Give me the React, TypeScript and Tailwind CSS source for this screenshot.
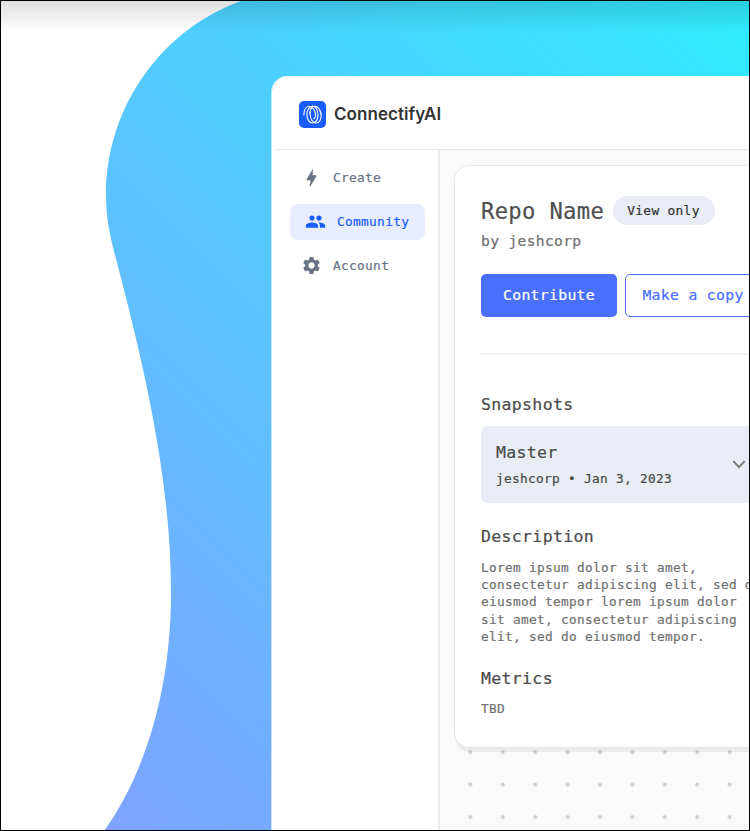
import type { ReactNode } from 'react';
import { MdPeople, MdSettings } from 'react-icons/md';

function Backdrop() {
  return (
    <svg className="absolute inset-0" width="750" height="831" viewBox="0 0 750 831" aria-hidden="true">
      <defs>
        <linearGradient id="sky" gradientUnits="userSpaceOnUse" x1="750" y1="0" x2="15" y2="735">
          <stop offset="0" stopColor="#2febff" />
          <stop offset="1" stopColor="#7ea3ff" />
        </linearGradient>
      </defs>
      <path
        d="M244 0C162 28 106 107 106 195C106 224 112 243 121 278C150 390 171 492 171 593C171 690 145 774 104 831H750V0Z"
        fill="url(#sky)"
      />
    </svg>
  );
}

function Logo() {
  return (
    <svg width="27" height="27" viewBox="0 0 27 27" className="shrink-0" aria-hidden="true">
      <rect width="27" height="27" rx="5" fill="#1a5cff" />
      <g fill="none" stroke="#fff" strokeWidth="1.15" strokeLinecap="round">
        <path d="M4.8 14C5 8.5 7.3 5.2 10 5.2C13.5 5.2 16.6 9.5 16.6 14.5" />
        <path d="M11 12C11 17.5 13.5 22 17 22C20.2 22 22.2 18.5 22.2 13.5" />
        <path d="M13.6 5.2C10.4 5.2 7.9 9 7.9 13.5C7.9 18.5 10.4 22 13.6 22C16.8 22 19 18.5 19 13.7C19 9 16.8 5.2 13.6 5.2Z" />
        <path d="M13.6 5.2C12 6.5 11 9.5 11 12M16.6 14.5C16.4 16 15.5 17.5 14.8 17.8" />
        <path d="M15.5 5.4C18.8 5 21 8.5 22.2 13.5" />
      </g>
    </svg>
  );
}

function Bolt() {
  return (
    <svg width="11" height="18" viewBox="0 0 11 18" className="ml-[4.5px]" fill="currentColor" aria-hidden="true">
      <path
        d="M6.6 .8 1 10.2Q.8 10.9 1.4 10.9H5L4.1 17.2 9.9 7.4Q10.2 6.6 9.4 6.6H6.3Z"
        stroke="currentColor"
        strokeWidth="0.7"
        strokeLinejoin="round"
      />
    </svg>
  );
}

function NavItem({ icon, label, active }: { icon: ReactNode; label: string; active?: boolean }) {
  return (
    <div
      className={
        active
          ? 'flex h-9 items-center rounded-[8px] bg-[#e8eeff] pl-[14px] text-[12.8px] text-[#1a5cff]'
          : 'flex h-9 items-center pl-[11px] text-[12.8px] text-[#687385]'
      }
    >
      <span className={active ? 'flex w-[33px] shrink-0' : 'flex w-[32px] shrink-0'}>{icon}</span>
      <span>{label}</span>
    </div>
  );
}

const heading = 'text-[16.55px] leading-[22px] text-[#4b4b4b]';

export default function App() {
  return (
    <div className="relative flex h-[831px] w-[750px] overflow-hidden bg-white pt-[76px] pl-[271px] font-['DejaVu_Sans_Mono','Liberation_Mono',monospace] tracking-[0.32px] whitespace-nowrap">
      <Backdrop />
      <div className="relative flex w-[700px] shrink-0 flex-col rounded-tl-[16px] border-l border-white/60 bg-white bg-clip-padding [-webkit-text-stroke:0.2px_currentColor]">
        <header className="ml-[3px] flex h-[74px] shrink-0 items-center border-b border-[#e5e5e5] pt-[3px] pl-[24px] [-webkit-text-stroke:0px]">
          <Logo />
          <span className="mt-px ml-[8px] font-['Inter',sans-serif] text-[17px] font-semibold tracking-[0.05px] text-[#333]">
            ConnectifyAI
          </span>
        </header>
        <div className="flex grow">
          <nav className="flex w-[168px] shrink-0 flex-col gap-[8px] border-r-2 border-[#ececec] pt-[10px] pr-[13px] pl-[18px]">
            <NavItem icon={<Bolt />} label="Create" />
            <NavItem icon={<MdPeople size={21} className="-mt-px ml-px" />} label="Community" active />
            <NavItem icon={<MdSettings size={21} className="-mt-[2px]" />} label="Account" />
          </nav>
          <main className="grow bg-[#fafafa] bg-[radial-gradient(circle,#cecece_1.6px,transparent_2.4px)] bg-[length:32.43px_32.43px] bg-[position:14.1px_2.4px] pt-[15px] pl-[14px]">
            <section className="h-[583px] w-[420px] rounded-[15px] border border-[#e6e6e6] bg-white pt-[30px] pl-[26px] shadow-[1px_4px_0_0_rgb(0_0_0/0.06)]">
              <div className="flex h-[29px] items-center">
                <h1 className="w-[131.5px] text-[22.2px] leading-[28px] text-[#505050]">Repo Name</h1>
                <span className="flex h-[29px] w-[102px] items-center justify-center rounded-full bg-[#e9ecf5] text-[12.85px] text-[#333]">
                  View only
                </span>
              </div>
              <p className="mt-[6px] text-[14.65px] leading-[20px] text-[#707070]">by jeshcorp</p>
              <div className="mt-[23px] flex gap-[8px] text-[14.75px]">
                <button className="h-[43px] w-[136px] rounded-[5px] bg-[#4a6fff] text-white">Contribute</button>
                <button className="h-[43px] w-[136px] rounded-[5px] border border-[#4a6fff] text-[#4a6fff]">
                  Make a copy
                </button>
              </div>
              <hr className="mt-[36px] border-t-2 border-[#f0f0f0]" />
              <h2 className={`mt-[39px] ${heading}`}>Snapshots</h2>
              <div className="mt-[10px] flex h-[77px] w-[280px] items-center rounded-[7px] bg-[#e9ecf5] pl-[15px]">
                <div className="w-[236px]">
                  <div className={heading}>Master</div>
                  <div className="mt-[6px] text-[12.75px] leading-[18px] text-[#484848]">jeshcorp • Jan 3, 2023</div>
                </div>
                <svg width="14" height="9" viewBox="0 0 14 9" fill="none" stroke="#777" strokeWidth="1.9" className="shrink-0">
                  <path d="M1.3 1.2 7 7.2l5.7-6" />
                </svg>
              </div>
              <h2 className={`mt-[23px] ${heading}`}>Description</h2>
              <p className="mt-[11px] text-[12.76px] leading-[17.2px] text-[#707070]">
                Lorem ipsum dolor sit amet,
                <br />
                consectetur adipiscing elit, sed do
                <br />
                eiusmod tempor lorem ipsum dolor
                <br />
                sit amet, consectetur adipiscing
                <br />
                elit, sed do eiusmod tempor.
              </p>
              <h2 className={`mt-[23px] ${heading}`}>Metrics</h2>
              <p className="mt-[10px] text-[12.76px] leading-[18px] text-[#707070]">TBD</p>
            </section>
          </main>
        </div>
      </div>
      <div className="pointer-events-none absolute inset-x-0 top-0 h-[32px] bg-linear-to-b from-black/13 to-transparent" />
      <div className="pointer-events-none absolute inset-0 border border-black" />
    </div>
  );
}
